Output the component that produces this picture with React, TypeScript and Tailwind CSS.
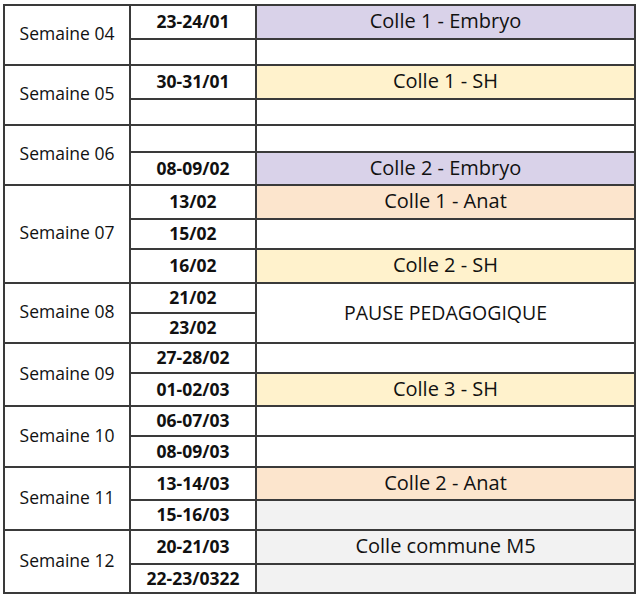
import React from "react"

// Planning des colles, semaines 04 à 12
type Slot = { date: string; colle?: string; color?: string; pause?: boolean }
type Week = { label: string; slots: Slot[] }

const purple = "bg-[#d9d2e9]"
const yellow = "bg-[#fff2cc]"
const peach = "bg-[#fce5cd]"
const gray = "bg-[#f2f2f2]"

const weeks: Week[] = [
  { label: "Semaine 04", slots: [{ date: "23-24/01", colle: "Colle 1 - Embryo", color: purple }, { date: "" }] },
  { label: "Semaine 05", slots: [{ date: "30-31/01", colle: "Colle 1 - SH", color: yellow }, { date: "" }] },
  { label: "Semaine 06", slots: [{ date: "" }, { date: "08-09/02", colle: "Colle 2 - Embryo", color: purple }] },
  {
    label: "Semaine 07",
    slots: [
      { date: "13/02", colle: "Colle 1 - Anat", color: peach },
      { date: "15/02" },
      { date: "16/02", colle: "Colle 2 - SH", color: yellow },
    ],
  },
  { label: "Semaine 08", slots: [{ date: "21/02", colle: "PAUSE PEDAGOGIQUE", pause: true }, { date: "23/02" }] },
  { label: "Semaine 09", slots: [{ date: "27-28/02" }, { date: "01-02/03", colle: "Colle 3 - SH", color: yellow }] },
  { label: "Semaine 10", slots: [{ date: "06-07/03" }, { date: "08-09/03" }] },
  { label: "Semaine 11", slots: [{ date: "13-14/03", colle: "Colle 2 - Anat", color: peach }, { date: "15-16/03", color: gray }] },
  {
    label: "Semaine 12",
    slots: [
      { date: "20-21/03", colle: "Colle commune M5", color: gray },
      { date: "22-23/0322", color: gray },
    ],
  },
]

const rowSpan: Record<number, string> = { 2: "row-span-2", 3: "row-span-3" }

export default function App() {
  return (
    <div className="bg-white w-[639px] h-[598px] pt-[4px] pl-[3px] font-['Open_Sans',sans-serif] text-[#111]">
      <div className="grid w-[633px] grid-cols-[124px_124px_377px] grid-rows-[32px_24px_32px_24px_25px_31px_32px_28px_32px_28px_28px_28px_31px_28px_29px_31px_28px_32px_27px] gap-[2px] p-[2px] bg-[#3a3a3a]">
        {weeks.map((week) => (
          <React.Fragment key={week.label}>
            <div
              className={`${rowSpan[week.slots.length]} bg-white flex items-center justify-center text-[17.5px] pb-[3px]`}
            >
              {week.label}
            </div>
            {week.slots.map((slot, i) => (
              <React.Fragment key={i}>
                <div className="bg-white flex items-center justify-center font-bold text-[17.5px] pb-[1px]">
                  {slot.date}
                </div>
                {slot.pause ? (
                  <div className="row-span-2 bg-white flex items-center justify-center text-[19.5px]">{slot.colle}</div>
                ) : week.label === "Semaine 08" ? null : (
                  <div className={`${slot.color ?? "bg-white"} flex items-center justify-center text-[20px] pb-[2px]`}>
                    {slot.colle}
                  </div>
                )}
              </React.Fragment>
            ))}
          </React.Fragment>
        ))}
      </div>
    </div>
  )
}
